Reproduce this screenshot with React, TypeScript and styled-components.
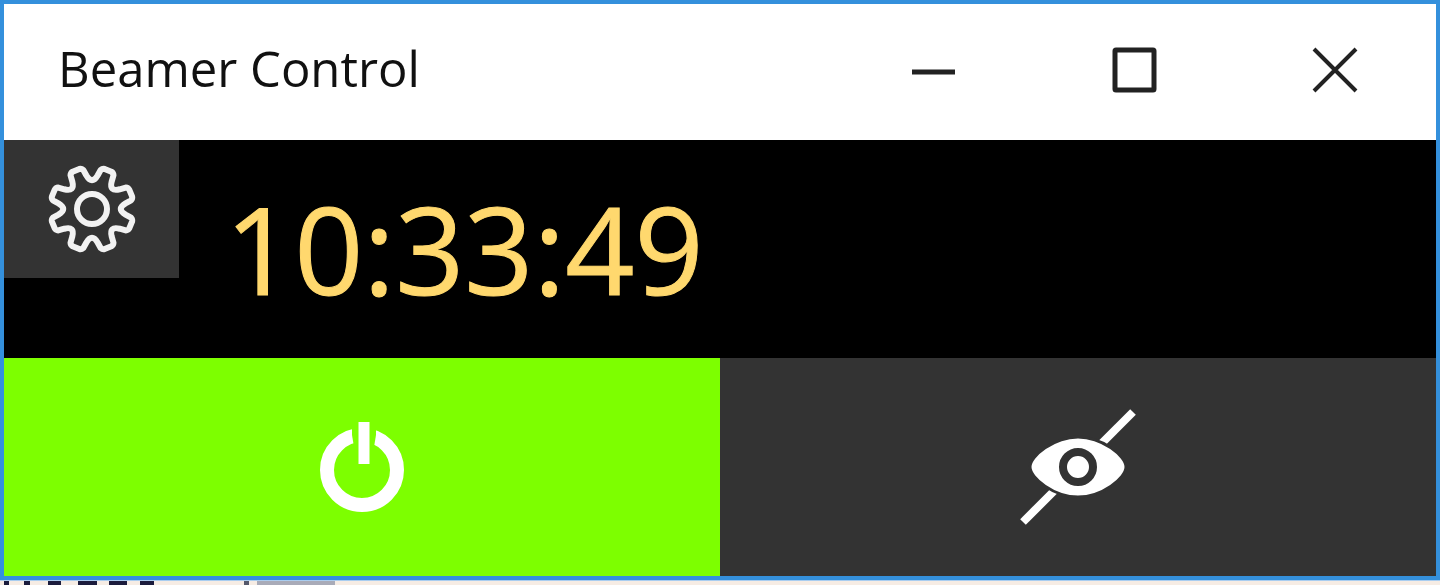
import React from "react";
import styled, { createGlobalStyle } from "styled-components";

const GlobalStyle = createGlobalStyle`
  *, *::before, *::after { box-sizing: border-box; }
  html, body { margin: 0; }
  body { background: #f6ece4; overflow: hidden; }
`;

const Page = styled.div`
  display: flex;
  flex-direction: column;
  height: 100vh;
  font-family: "Segoe UI", "Open Sans", "Noto Sans", sans-serif;
`;

const Window = styled.main`
  flex: 1;
  display: flex;
  flex-direction: column;
  border: 4px solid #3490dc;
  background: #000;
`;

const TitleBar = styled.header`
  display: flex;
  align-items: center;
  justify-content: space-between;
  height: 136px;
  padding-left: 54px;
  background: #fff;
`;

const Title = styled.h1`
  margin: 0;
  padding-bottom: 8px;
  font-size: 49px;
  line-height: 64px;
  font-weight: 400;
  color: #111;
  white-space: nowrap;
`;

const Caption = styled.div`
  display: flex;
  align-self: stretch;
`;

const PlainButton = styled.button`
  display: flex;
  align-items: center;
  justify-content: center;
  border: 0;
  padding: 0;
  margin: 0;
  color: #fff;
  font: inherit;
  cursor: pointer;
`;

const CaptionButton = styled(PlainButton)`
  width: 201px;
  padding-bottom: 4px;
  background: #fff;
  color: #222;
`;

const ClockPanel = styled.section`
  flex: 1;
  display: flex;
  align-items: flex-start;
`;

const SettingsButton = styled(PlainButton)`
  width: 175px;
  height: 138px;
  background: #333;
`;

const Clock = styled.time`
  align-self: center;
  padding: 0 0 2px 46px;
  font-size: 121px;
  line-height: 160px;
  color: #ffd86e;
  -webkit-text-stroke: 1px #ffd86e;
`;

const Actions = styled.section`
  flex: 1;
  display: grid;
  grid-template-columns: 1fr 1fr;
`;

const ActionButton = styled(PlainButton)<{ $active?: boolean }>`
  background: ${(p) => (p.$active ? "#7dff00" : "#333")};
`;

const Drawing = styled.svg`
  display: block;
  overflow: visible;
`;

const Behind = styled.svg`
  display: block;
  height: 5px;
  width: 100%;
`;

const polar = (r: number, deg: number) => {
  const a = (deg * Math.PI) / 180;
  return `${(r * Math.sin(a)).toFixed(2)} ${(-r * Math.cos(a)).toFixed(2)}`;
};

const gearPath =
  Array.from({ length: 8 }, (_, i) => {
    const t = i * 45 + 22.5;
    return [
      `${i ? "L" : "M"}${polar(34, t - 13)}`,
      `L${polar(40, t - 10)}`,
      `Q${polar(42, t - 8)} ${polar(42, t - 5)}`,
      `L${polar(42, t + 5)}`,
      `Q${polar(42, t + 8)} ${polar(40, t + 10)}`,
      `L${polar(34, t + 13)}`,
      `Q${polar(24, t + 22.5)} ${polar(34, t + 32)}`,
    ].join(" ");
  }).join(" ") + "Z";

const GearIcon = () => (
  <Drawing width="92" height="92" viewBox="-46 -46 92 92" fill="none" stroke="#f2f2f2" strokeWidth="6" strokeLinejoin="round" aria-hidden="true">
    <path d={gearPath} />
    <circle r="15" />
  </Drawing>
);

const PowerIcon = () => (
  <Drawing width="84" height="92" viewBox="0 0 84 92" fill="none" stroke="#fff" aria-hidden="true">
    <mask id="power-gap">
      <rect width="84" height="92" fill="#fff" stroke="none" />
      <path d="M32 0H56V14L53 32H35L32 14Z" fill="#000" stroke="none" />
    </mask>
    <circle cx="42" cy="49" r="35" strokeWidth="14" mask="url(#power-gap)" />
    <path d="M44 1V43" strokeWidth="11" />
  </Drawing>
);

const EyeOffIcon = () => (
  <Drawing width="116" height="116" viewBox="0 0 116 116" aria-hidden="true">
    <path d="M3 113L113 3" stroke="#fff" strokeWidth="8" />
    <path d="M10 58C10 47 34 28 58 28C82 28 106 47 106 58C106 69 82 88 58 88C34 88 10 69 10 58Z" fill="#fff" stroke="#333" strokeWidth="3" />
    <circle cx="58" cy="58" r="15" fill="#fff" stroke="#333" strokeWidth="8" />
  </Drawing>
);

export default function App() {
  return (
    <Page>
      <GlobalStyle />
      <Window>
        <TitleBar>
          <Title>Beamer Control</Title>
          <Caption>
            <CaptionButton aria-label="Minimize">
              <Drawing width="46" height="46" viewBox="0 0 46 46" fill="none" stroke="currentColor" strokeWidth="5">
                <path d="M1 25H44" />
              </Drawing>
            </CaptionButton>
            <CaptionButton aria-label="Maximize">
              <Drawing width="46" height="46" viewBox="0 0 46 46" fill="none" stroke="currentColor" strokeWidth="5">
                <rect x="3" y="3" width="39" height="40" rx="1" />
              </Drawing>
            </CaptionButton>
            <CaptionButton aria-label="Close">
              <Drawing width="46" height="46" viewBox="0 0 46 46" fill="none" stroke="currentColor" strokeWidth="4">
                <path d="M1 2L43 44M43 2L1 44" />
              </Drawing>
            </CaptionButton>
          </Caption>
        </TitleBar>
        <ClockPanel>
          <SettingsButton aria-label="Settings">
            <GearIcon />
          </SettingsButton>
          <Clock>10:33:49</Clock>
        </ClockPanel>
        <Actions>
          <ActionButton $active aria-label="Power">
            <PowerIcon />
          </ActionButton>
          <ActionButton aria-label="Hide picture">
            <EyeOffIcon />
          </ActionButton>
        </Actions>
      </Window>
      <Behind aria-hidden="true">
        <rect width="100%" height="1" fill="#a9cdf0" />
        <path d="M4 3H9M24 3H30M48 3H61M78 3H97M109 3H127M140 3H154" stroke="#1b1b3c" strokeWidth="4" />
        <path d="M244 3H249" stroke="#55586a" strokeWidth="4" />
        <path d="M257 3H335" stroke="#a9abb8" strokeWidth="4" />
      </Behind>
    </Page>
  );
}
